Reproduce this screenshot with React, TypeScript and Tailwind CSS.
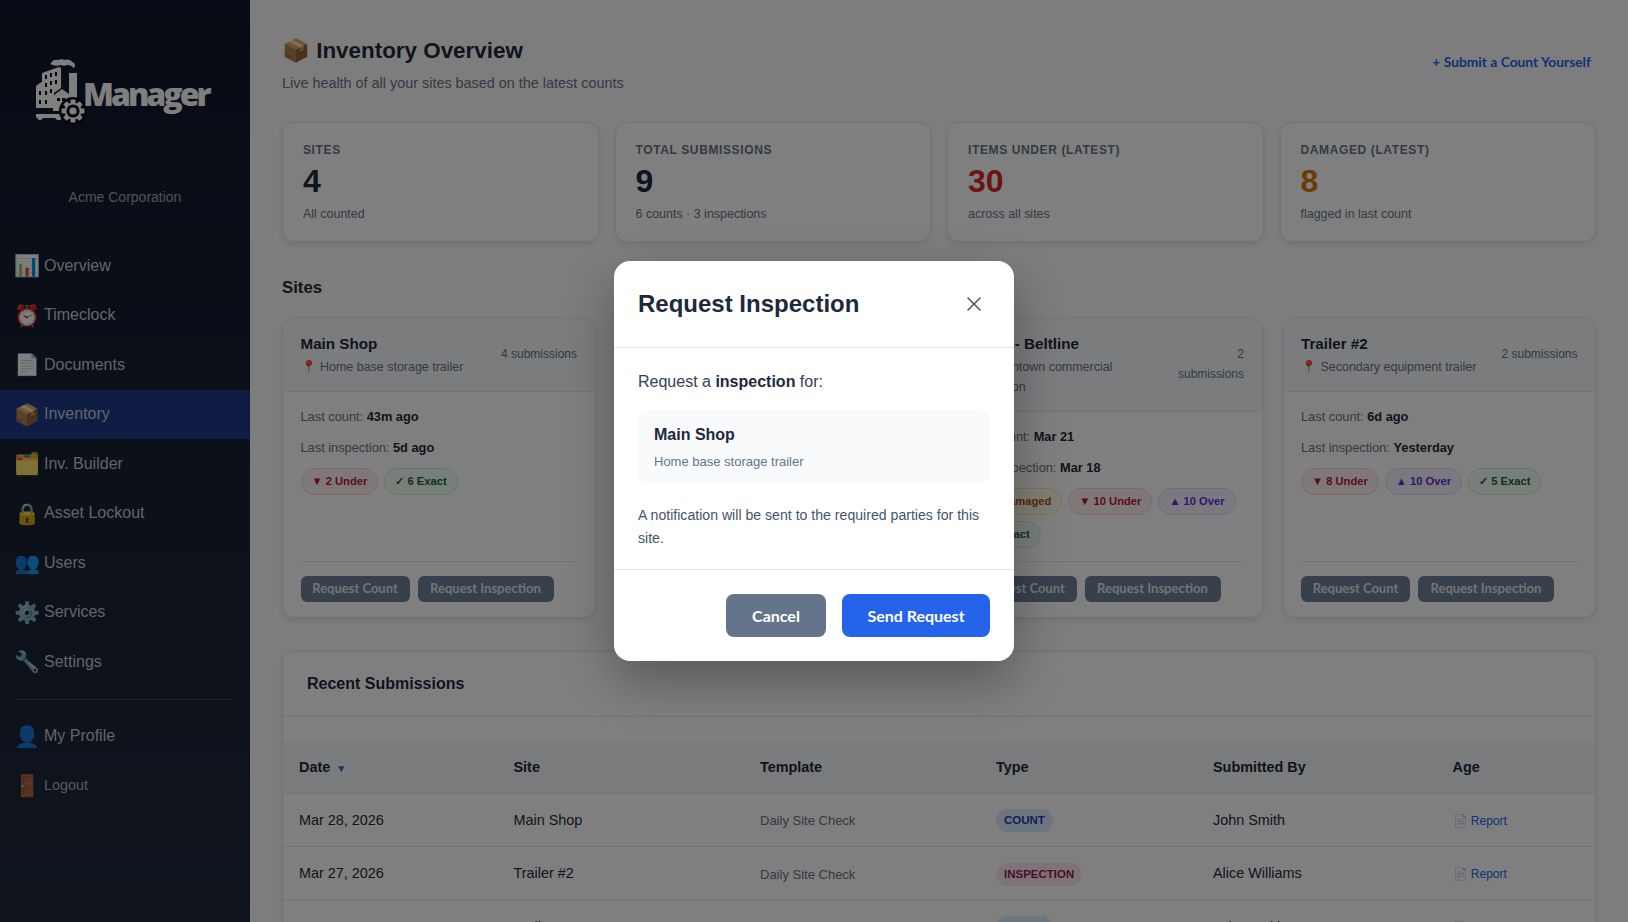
import { X } from "lucide-react";

const navItems = [
  { icon: "📊", label: "Overview" },
  { icon: "⏰", label: "Timeclock" },
  { icon: "📄", label: "Documents" },
  { icon: "📦", label: "Inventory", active: true },
  { icon: "🗂️", label: "Inv. Builder" },
  { icon: "🔒", label: "Asset Lockout" },
  { icon: "👥", label: "Users" },
  { icon: "⚙️", label: "Services" },
  { icon: "🔧", label: "Settings" },
];

const stats = [
  { label: "Sites", value: "4", sub: "All counted", color: "text-[#1e293b]" },
  { label: "Total Submissions", value: "9", sub: "6 counts · 3 inspections", color: "text-[#1e293b]" },
  { label: "Items Under (Latest)", value: "30", sub: "across all sites", color: "text-[#dc2626]" },
  { label: "Damaged (Latest)", value: "8", sub: "flagged in last count", color: "text-[#d97706]" },
];

const chipStyles = {
  under: "bg-[#fff1f2] border-[#fecdd3] text-[#be123c]",
  over: "bg-[#f5f3ff] border-[#ddd6fe] text-[#6d28d9]",
  exact: "bg-[#f0fdf4] border-[#bbf7d0] text-[#166534]",
  damaged: "bg-[#fffbeb] border-[#fde68a] text-[#b45309]",
};

type Chip = { kind: keyof typeof chipStyles; mark: string; text: string };

const sites: { name: string; place: string; subs: string; count: string; inspection: string; chips: Chip[] }[] = [
  {
    name: "Main Shop",
    place: "Home base storage trailer",
    subs: "4 submissions",
    count: "43m ago",
    inspection: "5d ago",
    chips: [
      { kind: "under", mark: "▼", text: "2 Under" },
      { kind: "exact", mark: "✓", text: "6 Exact" },
    ],
  },
  {
    name: "Trailer #1",
    place: "Primary equipment trailer",
    subs: "1 submission",
    count: "8d ago",
    inspection: "Mar 12",
    chips: [
      { kind: "under", mark: "▼", text: "10 Under" },
      { kind: "exact", mark: "✓", text: "4 Exact" },
    ],
  },
  {
    name: "Site C - Beltline",
    place: "Downtown commercial renovation",
    subs: "2 submissions",
    count: "Mar 21",
    inspection: "Mar 18",
    chips: [
      { kind: "damaged", mark: "⚠", text: "8 Damaged" },
      { kind: "under", mark: "▼", text: "10 Under" },
      { kind: "over", mark: "▲", text: "10 Over" },
      { kind: "exact", mark: "✓", text: "2 Exact" },
    ],
  },
  {
    name: "Trailer #2",
    place: "Secondary equipment trailer",
    subs: "2 submissions",
    count: "6d ago",
    inspection: "Yesterday",
    chips: [
      { kind: "under", mark: "▼", text: "8 Under" },
      { kind: "over", mark: "▲", text: "10 Over" },
      { kind: "exact", mark: "✓", text: "5 Exact" },
    ],
  },
];

const rows = [
  { date: "Mar 28, 2026", site: "Main Shop", type: "COUNT", by: "John Smith" },
  { date: "Mar 27, 2026", site: "Trailer #2", type: "INSPECTION", by: "Alice Williams" },
  { date: "Mar 21, 2026", site: "Trailer #1", type: "COUNT", by: "John Smith" },
];

function Logo() {
  return (
    <svg width="54" height="66" viewBox="0 0 54 66" className="shrink-0">
      {/* smoke */}
      <path d="M16 5c1-3 5-4 7-3 2-1 5-1 7 0 3-1 6 0 7 2 2 0 3 2 3 4l-1 2c-2-2-4-3-7-3-2 1-4 1-6 0-3 1-6 1-8 0-2 0-3-1-2-2z" fill="#fff" />
      {/* tall block */}
      <path d="M5 25l2-1V15l17-6 2 1 0 14 0 6-7 5v15H1V28z" fill="#fff" />
      {/* factory */}
      <path d="M18 38l9-7 7 5V15h8v28l-9 10H18z" fill="#fff" />
      {/* windows */}
      <g fill="#070b15">
        <rect x="10" y="17" width="2" height="4" />
        <rect x="15" y="15" width="2" height="4" />
        <rect x="20" y="14" width="2" height="4" />
        <rect x="10" y="25" width="2" height="4" />
        <rect x="15" y="23" width="2" height="4" />
        <rect x="20" y="22" width="2" height="4" />
        <rect x="4" y="33" width="2" height="4" />
        <rect x="10" y="33" width="2" height="4" />
        <rect x="15" y="31" width="2" height="4" />
        <rect x="4" y="42" width="2" height="4" />
        <rect x="10" y="42" width="2" height="4" />
        <rect x="22" y="40" width="3" height="3" />
        <rect x="27" y="40" width="3" height="3" />
      </g>
      <path d="M1 56h26l1 4-3 2h-3l-2-2H8l-2 2H4l-3-3z" fill="#fff" />
      {/* gear */}
      <circle cx="38" cy="53" r="14" fill="#070b15" />
      {[0, 45, 90, 135].map((a) => (
        <rect key={a} x="35.5" y="41.5" width="5" height="23" rx="1" fill="#fff" transform={`rotate(${a} 38 53)`} />
      ))}
      <circle cx="38" cy="53" r="8.6" fill="#fff" />
      <circle cx="38" cy="53" r="6.6" fill="#070b15" />
      <circle cx="38" cy="53" r="3.6" fill="#fff" />
    </svg>
  );
}

function NavRow({ icon, label, active, small }: { icon: string; label: string; active?: boolean; small?: boolean }) {
  return (
    <div className={`flex h-[49.5px] items-center pl-[14px] ${active ? "bg-[#1e3a8a]" : ""}`}>
      <span className="w-[30px] text-[21px] leading-none">{icon}</span>
      <span className={small ? "text-[14.4px] text-[#b0b5bc]" : "text-[16px] text-[#c4c9d0]"}>{label}</span>
    </div>
  );
}

function SiteCard({ site }: { site: (typeof sites)[number] }) {
  return (
    <div className="flex flex-col overflow-hidden rounded-xl border border-[#e2e8f0] bg-white shadow-[0_2px_6px_rgba(0,0,0,0.1)]">
      <div className="flex items-start justify-between gap-2 border-b border-[#e2e8f0] bg-[#f6f8fb] px-[17.5px] pt-4 pb-[14px]">
        <div>
          <div className="text-[15.2px] leading-[18px] font-bold text-[#1e293b]">{site.name}</div>
          <div className="mt-[4px] text-[12.48px] leading-5 text-[#64748b]">📍 {site.place}</div>
        </div>
        <div className="mt-[9px] text-right text-[12px] leading-5 text-[#64748b]">{site.subs}</div>
      </div>
      <div className="flex flex-1 flex-col px-[17.5px] pt-[15px]">
        <div className="text-[12.8px] leading-5 text-[#64748b]">
          Last count: <b className="text-[#1e293b]">{site.count}</b>
        </div>
        <div className="mt-[11px] text-[12.8px] leading-5 text-[#64748b]">
          Last inspection: <b className="text-[#1e293b]">{site.inspection}</b>
        </div>
        <div className="mt-[10px] flex flex-wrap gap-x-[6px] gap-y-[6px]">
          {site.chips.map((c) => (
            <span key={c.text} className={`rounded-full border px-[10px] py-[4px] text-[11.2px] leading-[17px] font-bold ${chipStyles[c.kind]}`}>
              {c.mark} {c.text}
            </span>
          ))}
        </div>
        <div className="mt-auto flex gap-2 border-t border-[#e2e8f0] pt-[14px] pb-[15px]">
          <button className="h-[26px] w-[109px] rounded-md bg-[#6f809a] font-['Lato',sans-serif] text-[13px] font-bold text-[#e2e8f0]">Request Count</button>
          <button className="h-[26px] w-[136px] rounded-md bg-[#6f809a] font-['Lato',sans-serif] text-[13px] font-bold text-[#e2e8f0]">Request Inspection</button>
        </div>
      </div>
    </div>
  );
}

export default function App() {
  return (
    <div className="relative flex h-[922px] w-full overflow-hidden bg-[#fbfbfb] font-['Liberation_Sans',Arial,sans-serif]">
      <aside className="flex w-[250px] shrink-0 flex-col bg-gradient-to-b from-[#0f172a] to-[#1e293b]">
        <div className="flex h-[180px] items-end justify-start pb-[56px] pl-[35px]">
          <Logo />
          <span className="mb-[14px] -ml-[6px] font-['Open_Sans',sans-serif] text-[32px] leading-none font-extrabold tracking-[-3px] text-white">Manager</span>
        </div>
        <div className="mt-[8px] text-center text-[14px] leading-[18px] text-[#a0a5ad]">Acme Corporation</div>
        <nav className="mt-[35px]">
          {navItems.map((n) => (
            <NavRow key={n.label} {...n} />
          ))}
          <div className="mx-4 my-[12px] border-t border-[#334155]" />
          <NavRow icon="👤" label="My Profile" />
          <NavRow icon="🚪" label="Logout" small />
        </nav>
      </aside>

      <main className="min-w-0 flex-1 px-8 pt-[33px]">
        <div className="flex items-center justify-between">
          <div>
            <h1 className="text-[22.4px] leading-9 font-bold text-[#1e293b]">📦 Inventory Overview</h1>
            <p className="mt-[3px] text-[14.4px] leading-[22px] text-[#64748b]">Live health of all your sites based on the latest counts</p>
          </div>
          <a className="mr-[5px] mb-[3px] font-['Lato',sans-serif] text-[13.8px] font-bold text-[#2563eb]">+ Submit a Count Yourself</a>
        </div>

        <div className="mt-7 grid grid-cols-4 gap-4">
          {stats.map((s) => (
            <div key={s.label} className="h-[120px] rounded-xl border border-[#e2e8f0] bg-white px-5 pt-5 shadow-[0_2px_6px_rgba(0,0,0,0.1)]">
              <div className="text-[12px] leading-[14px] font-bold tracking-[0.62px] text-[#64748b] uppercase">{s.label}</div>
              <div className={`mt-[5px] text-[32px] leading-[38px] font-bold ${s.color}`}>{s.value}</div>
              <div className="mt-[7px] text-[12.48px] leading-[15px] text-[#64748b]">{s.sub}</div>
            </div>
          ))}
        </div>

        <h2 className="mt-9 text-[16.8px] leading-5 font-bold text-[#1e293b]">Sites</h2>

        <div className="mt-5 grid h-[300px] grid-cols-4 gap-5">
          {sites.map((s) => (
            <SiteCard key={s.name} site={s} />
          ))}
        </div>

        <div className="mt-[33px] rounded-xl border border-[#e2e8f0] bg-white shadow-[0_2px_6px_rgba(0,0,0,0.1)]">
          <div className="flex h-[65px] items-center border-b border-[#e2e8f0] px-6 text-[16px] font-bold text-[#1e293b]">Recent Submissions</div>
          <table className="mt-6 w-full table-fixed border-collapse text-left text-[14.4px] text-[#1e293b]">
            <colgroup>
              <col className="w-[214.5px]" />
              <col className="w-[246.5px]" />
              <col className="w-[236px]" />
              <col className="w-[217px]" />
              <col className="w-[239.5px]" />
              <col />
            </colgroup>
            <thead className="bg-[#f3f6fa]">
              <tr className="h-[52px] border-b border-[#e2e8f0]">
                <th className="px-4 pt-[2px] font-bold">
                  Date <span className="ml-[2px] text-[10px] text-[#2563eb]">▼</span>
                </th>
                <th className="px-4 pt-[2px] font-bold">Site</th>
                <th className="px-4 pt-[2px] font-bold">Template</th>
                <th className="px-4 pt-[2px] font-bold">Type</th>
                <th className="px-4 pt-[2px] font-bold">Submitted By</th>
                <th className="px-4 pt-[2px] font-bold">Age</th>
              </tr>
            </thead>
            <tbody>
              {rows.map((r) => (
                <tr key={r.date} className="h-[53.5px] border-b border-[#e2e8f0]">
                  <td className="px-4 pt-[2px]">{r.date}</td>
                  <td className="px-4 pt-[2px]">{r.site}</td>
                  <td className="px-4 pt-[2px] text-[13px] text-[#64748b]">Daily Site Check</td>
                  <td className="px-4 pt-[2px]">
                    <span className={`inline-block rounded-xl px-2 py-[5px] text-[11.5px] leading-[13px] font-bold ${r.type === "COUNT" ? "bg-[#dbeafe] text-[#1e40af]" : "bg-[#fce7f3] text-[#9d174d]"}`}>{r.type}</span>
                  </td>
                  <td className="px-4 pt-[2px]">{r.by}</td>
                  <td className="px-4 pt-[2px] text-[12px] text-[#2563eb]">📄 Report</td>
                </tr>
              ))}
            </tbody>
          </table>
        </div>
      </main>

      {/* modal overlay */}
      <div className="absolute inset-0 flex items-center justify-center bg-black/50">
        <div className="w-[400px] rounded-2xl bg-white shadow-[0_20px_50px_rgba(0,0,0,0.3)]">
          <div className="flex h-[87px] items-center justify-between border-b border-[#e2e8f0] px-6">
            <h3 className="text-[24px] font-bold text-[#1e293b]">Request Inspection</h3>
            <button className="flex h-8 w-8 items-center justify-center text-[#475569]">
              <X size={24} strokeWidth={1.5} />
            </button>
          </div>
          <div className="border-b border-[#e2e8f0] px-6 pt-[22px] pb-[19px]">
            <p className="text-[16px] leading-6 text-[#334155]">
              Request a <b className="text-[#1e293b]">inspection</b> for:
            </p>
            <div className="mt-4 rounded-[10px] bg-[#f8fafc] px-4 pt-[15px] pb-[14px]">
              <div className="text-[16px] leading-5 font-bold text-[#1e293b]">Main Shop</div>
              <div className="mt-[9px] text-[13px] leading-4 text-[#64748b]">Home base storage trailer</div>
            </div>
            <p className="mt-5 text-[14.12px] leading-[23px] text-[#475569]">A notification will be sent to the required parties for this site.</p>
          </div>
          <div className="flex justify-end gap-4 p-6">
            <button className="h-[43px] w-[100px] rounded-lg bg-[#64748b] font-['Lato',sans-serif] text-[16px] font-bold text-white">Cancel</button>
            <button className="h-[43px] w-[148px] rounded-lg bg-[#2563eb] font-['Lato',sans-serif] text-[16px] font-bold text-white">Send Request</button>
          </div>
        </div>
      </div>
    </div>
  );
}
